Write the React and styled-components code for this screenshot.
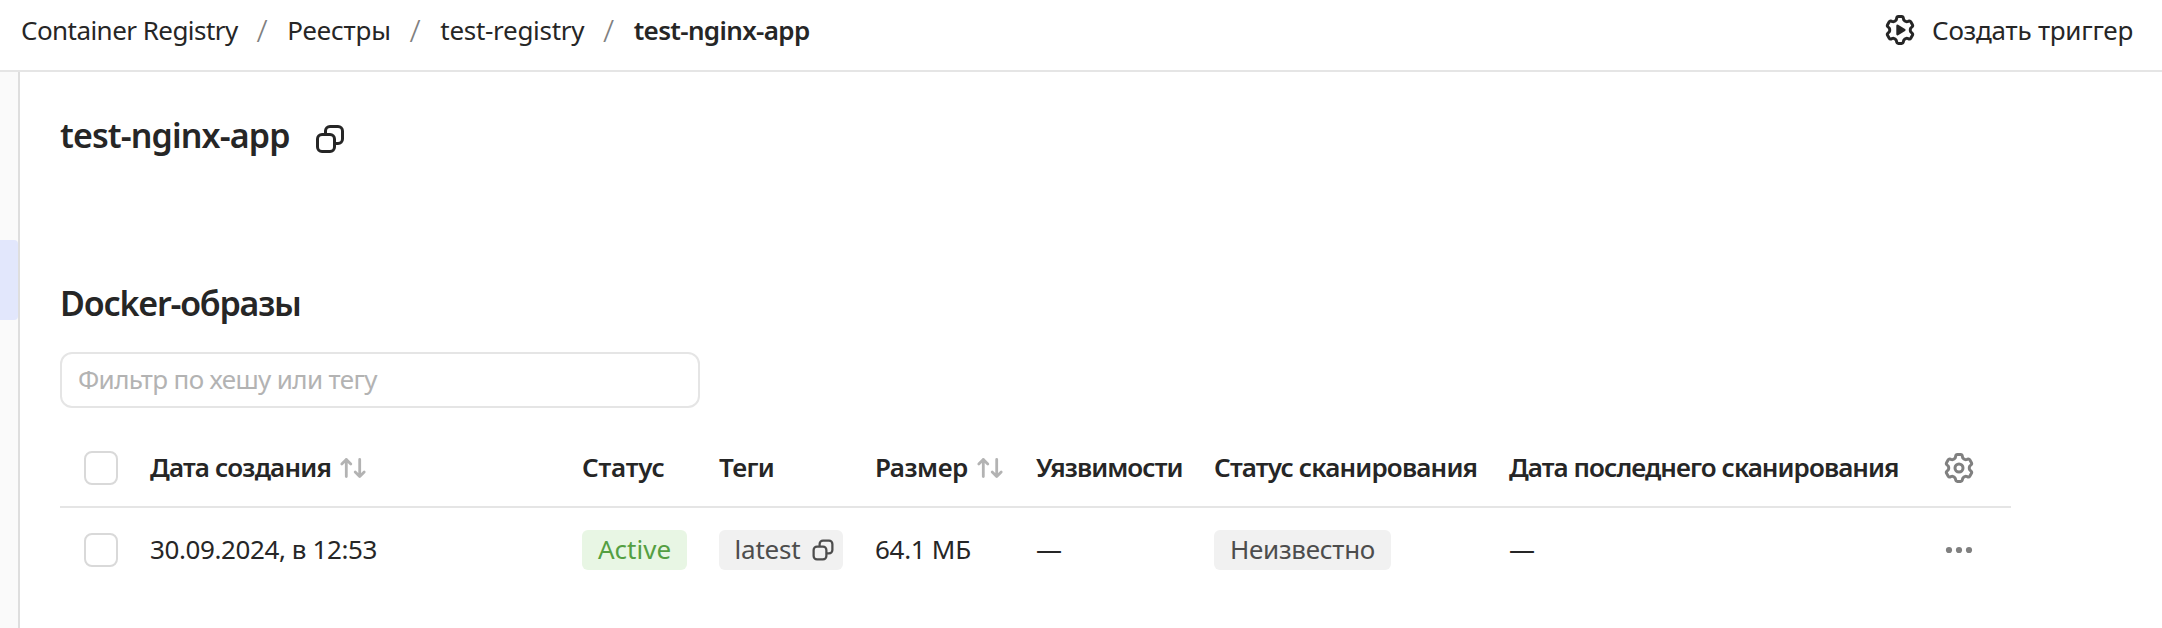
import React from "react";
import styled, { createGlobalStyle } from "styled-components";

const Global = createGlobalStyle`
  *, *::before, *::after { box-sizing: border-box; }
  body {
    margin: 0;
    background: #fff;
    color: #262626;
    font-family: "Noto Sans", "Open Sans", sans-serif;
    font-size: 26px;
    line-height: 36px;
    overflow: hidden;
  }
`;

const Page = styled.div`
  display: flex;
  flex-direction: column;
  height: 628px;
`;

const TopBar = styled.header`
  display: flex;
  align-items: center;
  justify-content: space-between;
  height: 72px;
  padding: 0 29px 10px 21px;
  border-bottom: 2px solid #e5e5e5;
`;

const Breadcrumbs = styled.nav`
  display: flex;
  align-items: center;
  gap: 18.8px;
`;

const Label = styled.span`
  white-space: nowrap;
  letter-spacing: ${(p) => p.$tracking || 0}px;
  font-weight: ${(p) => (p.$strong ? 600 : 400)};
`;

const Slash = styled.span`
  width: 12px;
  color: #808080;
  font-size: 32px;
  font-weight: 300;
  line-height: 36px;
`;

const TriggerButton = styled.button`
  display: flex;
  align-items: center;
  gap: 16px;
  padding: 0;
  border: 0;
  background: none;
  color: inherit;
  font: inherit;
`;

const Body = styled.div`
  display: flex;
  flex: 1;
`;

const Sidebar = styled.aside`
  width: 20px;
  padding-top: 168px;
  background: #fafafa;
  border-right: 2px solid #dedede;
`;

const ActiveItem = styled.div`
  height: 80px;
  border-radius: 0 4px 4px 0;
  background: #e2e7fc;
`;

const Main = styled.main`
  flex: 1;
  padding: 33px 0 0 40px;
`;

const TitleRow = styled.div`
  display: flex;
  align-items: center;
  gap: 24px;
  height: 60px;
`;

const Title = styled.h1`
  margin: 0;
  font-size: 34px;
  font-weight: 600;
  line-height: 60px;
  letter-spacing: -0.87px;
`;

const CopyButton = styled.button`
  display: flex;
  padding: 8px 0 0;
  border: 0;
  background: none;
  color: inherit;
`;

const SectionTitle = styled.h2`
  margin: 118px 0 29px;
  font-size: 34px;
  font-weight: 600;
  line-height: 40px;
  letter-spacing: -1.18px;
`;

const FilterInput = styled.input`
  display: block;
  width: 640px;
  height: 56px;
  padding: 0 16px 3px;
  border: 2px solid #e5e5e5;
  border-radius: 12px;
  outline: none;
  background: #fff;
  color: inherit;
  font: inherit;
  letter-spacing: -0.63px;

  &::placeholder {
    color: #b3b3b3;
    opacity: 1;
  }
`;

const Table = styled.div`
  width: 1951px;
  margin-top: 22px;
`;

const Row = styled.div`
  display: grid;
  grid-template-columns: 66px 432px 137px 156px 161px 178px 295px 434px 1fr;
  align-items: center;
  height: ${(p) => (p.$head ? 78 : 84)}px;
  padding-left: 24px;
  border-bottom: ${(p) => (p.$head ? "2px solid #e5e5e5" : "0")};
`;

const Cell = styled.div`
  display: flex;
  align-items: center;
  gap: 8px;
  padding-bottom: 2px;

  svg { margin-top: 2px; }
`;

const Checkbox = styled.span`
  width: 34px;
  height: 34px;
  border: 2px solid #d9d9d9;
  border-radius: 8px;
  background: #fff;
`;

const Badge = styled.span`
  display: inline-flex;
  align-items: center;
  justify-self: start;
  gap: 11px;
  height: 40px;
  padding: 0 ${(p) => p.$end || 16}px 2px ${(p) => p.$start || 16}px;
  border-radius: 6px;
  background: ${(p) => (p.$success ? "#e8f6e4" : "#f1f1f1")};
  color: ${(p) => (p.$success ? "#549f42" : "#4d4d4d")};

  svg { margin-top: 2px; }
`;

const IconSlot = styled.span`
  display: flex;
  color: #808080;
`;

const CopyIcon = ({ size }) => (
  <svg width={size} height={size} viewBox="0 0 16 16" fill="currentColor">
    <path
      fillRule="evenodd"
      clipRule="evenodd"
      d="M12 2.5H8A1.5 1.5 0 0 0 6.5 4v1H8a3 3 0 0 1 3 3v1.5h1A1.5 1.5 0 0 0 13.5 8V4A1.5 1.5 0 0 0 12 2.5M11 11h1a3 3 0 0 0 3-3V4a3 3 0 0 0-3-3H8a3 3 0 0 0-3 3v1H4a3 3 0 0 0-3 3v4a3 3 0 0 0 3 3h4a3 3 0 0 0 3-3zM4 6.5h4A1.5 1.5 0 0 1 9.5 8v4A1.5 1.5 0 0 1 8 13.5H4A1.5 1.5 0 0 1 2.5 12V8A1.5 1.5 0 0 1 4 6.5"
    />
  </svg>
);

// One tooth of the gear, pointing up; the outline repeats it every 60 degrees.
const TOOTH = [
  [-4.4, -9.4],
  [-3.6, -9.9], [-3.5, -10.8], [-3.4, -11.6],
  [-3.2, -12.8], [-2.6, -13.4], [-1.7, -13.4],
  [-0.6, -13.4], [0.6, -13.4], [1.7, -13.4],
  [2.6, -13.4], [3.2, -12.8], [3.4, -11.6],
  [3.5, -10.8], [3.6, -9.9], [4.4, -9.4],
];

const GEAR_OUTLINE =
  [0, 1, 2, 3, 4, 5]
    .map((k) => {
      const a = (k * Math.PI) / 3;
      const pts = TOOTH.map(
        ([x, y]) =>
          `${(x * Math.cos(a) - y * Math.sin(a)).toFixed(2)} ${(x * Math.sin(a) + y * Math.cos(a)).toFixed(2)}`
      );
      return `${k ? "L" : "M"}${pts[0]}C${pts.slice(1).join(" ")}`;
    })
    .join("") + "Z";

const GearIcon = ({ play }) => (
  <svg width="32" height="32" viewBox="-16 -16 32 32" fill="none" stroke="currentColor" strokeWidth="3" strokeLinejoin="round">
    <path d={GEAR_OUTLINE} />
    {play ? (
      <path d="M-2.5 -4.2L4.4 0L-2.5 4.2Z" fill="currentColor" strokeWidth="2.4" />
    ) : (
      <circle r="4" />
    )}
  </svg>
);

const SortIcon = () => (
  <svg width="28" height="24" viewBox="0 0 28 24" fill="none" stroke="#b3b3b3" strokeWidth="2.8" strokeLinecap="round" strokeLinejoin="round">
    <path d="M7.3 20.6V3.5M2.8 8l4.5-4.5L11.8 8M20.7 3.5v17.1M16.2 16.1l4.5 4.5 4.5-4.5" />
  </svg>
);

const DotsIcon = () => (
  <svg width="32" height="32" viewBox="-16 -16 32 32" fill="currentColor">
    <circle cx="-10" r="3.1" />
    <circle r="3.1" />
    <circle cx="10" r="3.1" />
  </svg>
);

const CRUMBS = [
  { text: "Container Registry", tracking: -0.55 },
  { text: "Реестры", tracking: -0.15 },
  { text: "test-registry", tracking: -0.3 },
  { text: "test-nginx-app", tracking: -0.65, strong: true },
];

const COLUMNS = [
  { text: "Дата создания", tracking: -0.82, sortable: true },
  { text: "Статус", tracking: -0.2 },
  { text: "Теги", tracking: -0.6 },
  { text: "Размер", tracking: -0.5, sortable: true },
  { text: "Уязвимости", tracking: -0.95 },
  { text: "Статус сканирования", tracking: -0.82 },
  { text: "Дата последнего сканирования", tracking: -0.93 },
];

export default function App() {
  return (
    <Page>
      <Global />
      <TopBar>
        <Breadcrumbs>
          {CRUMBS.map((c, i) => (
            <React.Fragment key={c.text}>
              {i > 0 && <Slash>/</Slash>}
              <Label $tracking={c.tracking} $strong={c.strong}>{c.text}</Label>
            </React.Fragment>
          ))}
        </Breadcrumbs>
        <TriggerButton>
          <GearIcon play />
          <Label $tracking={-0.23}>Создать триггер</Label>
        </TriggerButton>
      </TopBar>
      <Body>
        <Sidebar>
          <ActiveItem />
        </Sidebar>
        <Main>
          <TitleRow>
            <Title>test-nginx-app</Title>
            <CopyButton>
              <CopyIcon size={32} />
            </CopyButton>
          </TitleRow>
          <SectionTitle>Docker-образы</SectionTitle>
          <FilterInput placeholder="Фильтр по хешу или тегу" />
          <Table>
            <Row $head>
              <Checkbox />
              {COLUMNS.map((c) => (
                <Cell key={c.text}>
                  <Label $strong $tracking={c.tracking}>{c.text}</Label>
                  {c.sortable && <SortIcon />}
                </Cell>
              ))}
              <IconSlot>
                <GearIcon />
              </IconSlot>
            </Row>
            <Row>
              <Checkbox />
              <Cell>
                <Label $tracking={-0.4}>30.09.2024, в 12:53</Label>
              </Cell>
              <Badge $success>
                <Label>Active</Label>
              </Badge>
              <Badge $start={15.5} $end={8}>
                <Label $tracking={-0.2}>latest</Label>
                <CopyIcon size={24} />
              </Badge>
              <Cell>
                <Label $tracking={-0.3}>64.1 МБ</Label>
              </Cell>
              <Cell>—</Cell>
              <Badge>
                <Label $tracking={-0.28}>Неизвестно</Label>
              </Badge>
              <Cell>—</Cell>
              <IconSlot>
                <DotsIcon />
              </IconSlot>
            </Row>
          </Table>
        </Main>
      </Body>
    </Page>
  );
}
